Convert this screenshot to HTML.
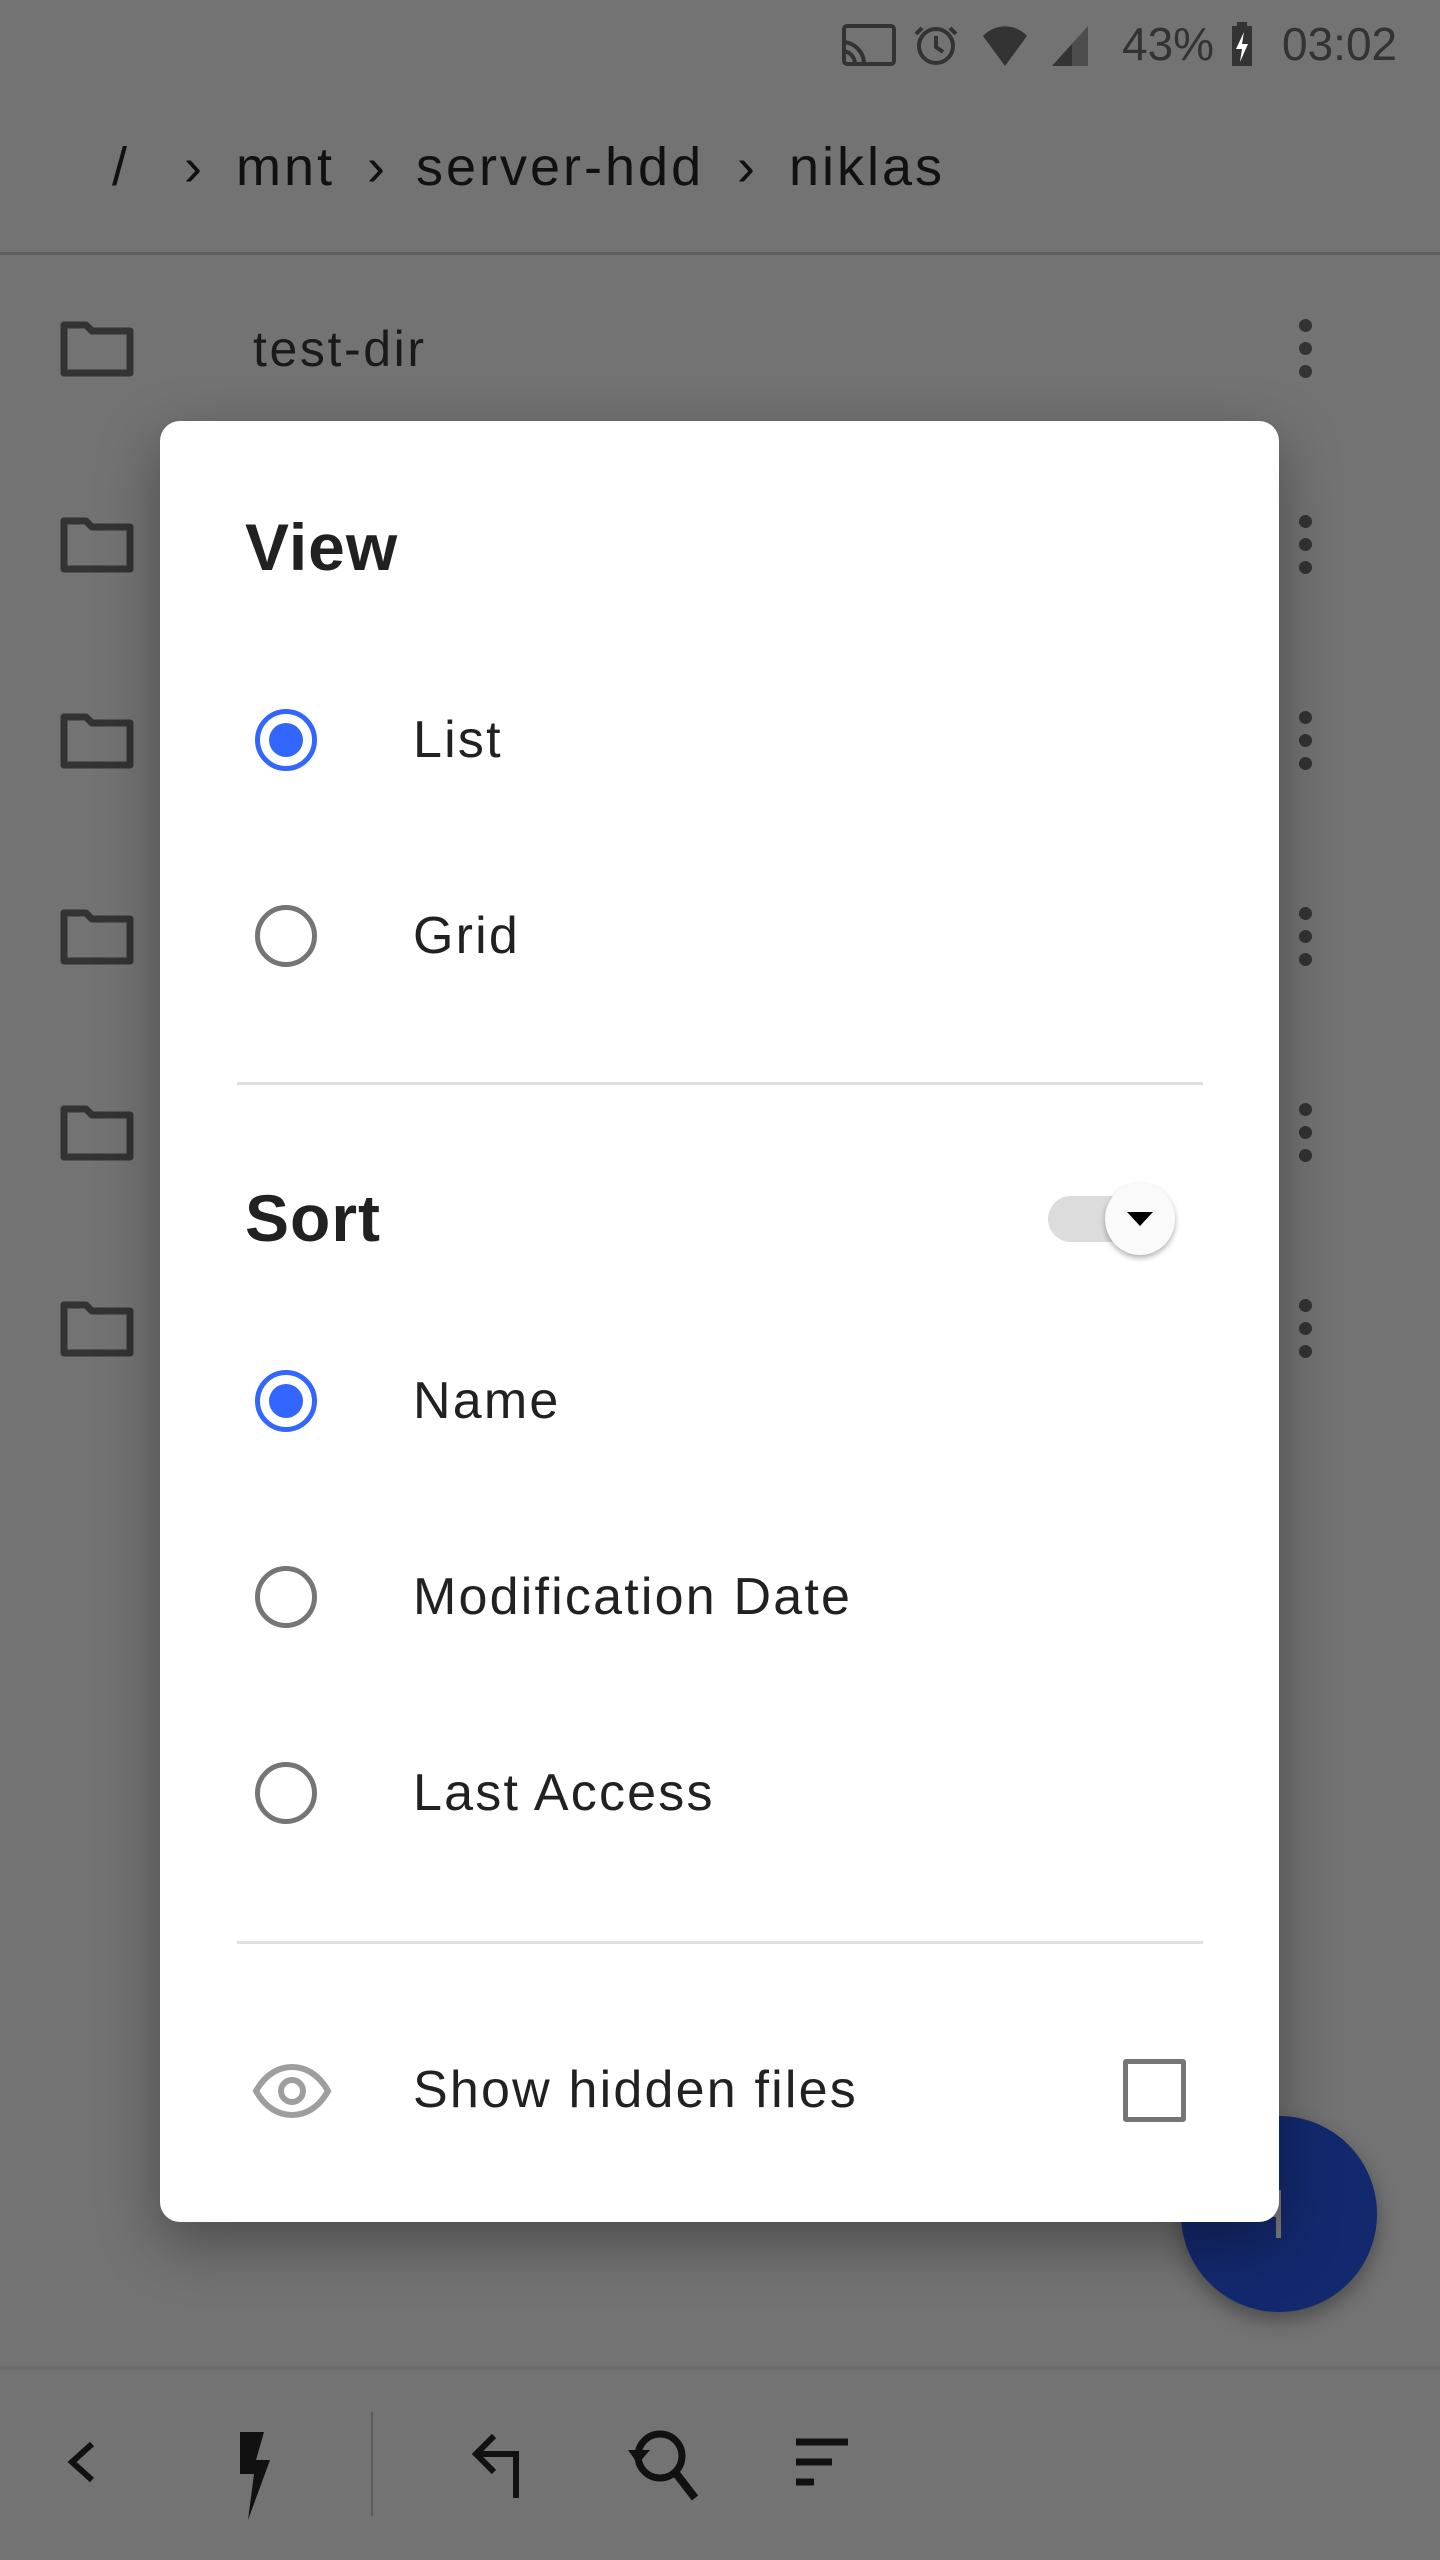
<!DOCTYPE html>
<html><head><meta charset="utf-8"><style>
*{margin:0;padding:0;box-sizing:border-box}
body{width:1440px;height:2560px;background:#737373;font-family:"Liberation Sans",sans-serif;position:relative;overflow:hidden}
.a{position:absolute}
.t{position:absolute;transform:translateY(-50%);white-space:nowrap}
.st{color:#333;font-size:46px;top:44px}
.bc{color:#111;font-size:54px;top:167px;letter-spacing:3px}
.row{color:#1a1a1a;font-size:50px;letter-spacing:2.6px}
.dlg{left:160px;top:421px;width:1119px;height:1801px;background:#fff;border-radius:20px;box-shadow:0 20px 60px rgba(0,0,0,.35)}
.dt{color:#212121;font-size:52px;letter-spacing:2.2px}
.h{color:#212121;font-size:66px;font-weight:bold;letter-spacing:1px}
.rad{position:absolute;width:62px;height:62px;border-radius:50%;border:5px solid #757575;transform:translate(-50%,-50%)}
.rad.on{border-color:#3366ff}
.rad.on::after{content:"";position:absolute;left:9px;top:9px;width:34px;height:34px;border-radius:50%;background:#3366ff}
.hr{position:absolute;left:77px;width:966px;height:3px;background:#e0e0e0}
</style></head><body>
<svg class="a" style="left:838px;top:22px" width="320" height="46" viewBox="0 0 320 46">
<g fill="none" stroke="#333" stroke-width="4"><rect x="6" y="4" width="50" height="38" rx="3"/><path d="M4 20a22 22 0 0 1 22 22M4 29a13 13 0 0 1 13 13"/><circle cx="98" cy="24" r="17"/><path d="M98 14v11l7 5M84 6l-6 6M112 6l6 6"/></g>
<path d="M145 14a30 30 0 0 1 44 0l-22 30z" fill="#333"/>
<path d="M214 44l36-40v40z" fill="#333" opacity=".6"/><path d="M214 44l20-22v22z" fill="#333"/>
</svg>
<div class="t st" style="left:1122px">43%</div>
<svg class="a" style="left:1228px;top:20px" width="28" height="48"><rect x="4" y="6" width="20" height="40" fill="#333"/><rect x="9" y="2" width="10" height="5" fill="#333"/><path d="M16 12l-8 17h6l-2 13 8-18h-6z" fill="#fff"/></svg>
<div class="t st" style="left:1282px">03:02</div>
<div class="t bc" style="left:112px">/</div>
<div class="t bc" style="left:184px">›</div>
<div class="t bc" style="left:236px">mnt</div>
<div class="t bc" style="left:367px">›</div>
<div class="t bc" style="left:416px">server-hdd</div>
<div class="t bc" style="left:737px">›</div>
<div class="t bc" style="left:789px">niklas</div>
<div class="a" style="left:0;top:252px;width:1440px;height:3px;background:#5f5f5f"></div>
<div id="rows"></div>
<script>
var ys=[349,545,741,937,1133,1329],h='';
ys.forEach(function(y){h+='<svg class="a" style="left:60px;top:'+(y-28)+'px" width="76" height="56"><path d="M4 4h22l6 6h38v42H4z" fill="none" stroke="#333" stroke-width="7" stroke-linejoin="round"/></svg><div class="a" style="left:1299px;top:'+(y-30)+'px;width:14px"><div style="width:13px;height:13px;border-radius:50%;background:#333;margin-bottom:10px"></div><div style="width:13px;height:13px;border-radius:50%;background:#333;margin-bottom:10px"></div><div style="width:13px;height:13px;border-radius:50%;background:#333"></div></div>';});
document.getElementById('rows').innerHTML=h;
</script>
<div class="t row" style="left:253px;top:349px">test-dir</div>
<div class="a" style="left:1181px;top:2116px;width:196px;height:196px;border-radius:50%;background:#13296e;box-shadow:0 8px 20px rgba(0,0,0,.35)"></div>
<div class="a" style="left:1276px;top:2190px;width:5px;height:48px;background:#7a7a7a"></div>
<div class="a" style="left:1255px;top:2212px;width:26px;height:5px;background:#7a7a7a"></div>
<div class="a dlg">
<div class="t h" style="left:85px;top:126px">View</div>
<div class="rad on" style="left:126px;top:319px"></div>
<div class="t dt" style="left:253px;top:319px">List</div>
<div class="rad" style="left:126px;top:515px"></div>
<div class="t dt" style="left:253px;top:515px">Grid</div>
<div class="hr" style="top:661px"></div>
<div class="t h" style="left:85px;top:797px">Sort</div>
<div class="a" style="left:888px;top:775px;width:110px;height:46px;border-radius:23px;background:#dcdcdc"></div>
<div class="a" style="left:945px;top:762px;width:70px;height:72px;border-radius:50%;background:#fafafa;box-shadow:0 3px 6px rgba(0,0,0,.3)"></div>
<svg class="a" style="left:965px;top:789px" width="30" height="18"><path d="M2 2h26L15 16z" fill="#000"/></svg>
<div class="rad on" style="left:126px;top:980px"></div>
<div class="t dt" style="left:253px;top:980px">Name</div>
<div class="rad" style="left:126px;top:1176px"></div>
<div class="t dt" style="left:253px;top:1176px">Modification Date</div>
<div class="rad" style="left:126px;top:1372px"></div>
<div class="t dt" style="left:253px;top:1372px">Last Access</div>
<div class="hr" style="top:1520px"></div>
<svg class="a" style="left:92px;top:1642px" width="80" height="56" viewBox="0 0 80 56"><path d="M4 28C14 10 28 4 40 4s26 6 36 24C66 46 52 52 40 52S14 46 4 28z" fill="none" stroke="#9e9e9e" stroke-width="6"/><circle cx="40" cy="28" r="11" fill="none" stroke="#9e9e9e" stroke-width="6"/></svg>
<div class="t dt" style="left:253px;top:1669px">Show hidden files</div>
<div class="a" style="left:963px;top:1638px;width:63px;height:63px;border:5px solid #757575;border-radius:3px"></div>
</div>
<div class="a" style="left:0;top:2366px;width:1440px;height:4px;background:#6a6a6a"></div>
<svg class="a" style="left:0;top:2400px" width="900" height="130">
<path d="M92 44L72 62l20 18" fill="none" stroke="#111" stroke-width="6"/>
<path d="M240 32h24l-8 28h14l-22 60 6-46h-14z" fill="#111"/>
<rect x="371" y="12" width="2" height="104" fill="#5a5a5a"/>
<path d="M516 98V54h-36M494 36l-18 18 18 18" fill="none" stroke="#111" stroke-width="6"/>
<circle cx="660" cy="56" r="22" fill="none" stroke="#111" stroke-width="7"/><path d="M675 72l20 26" stroke="#111" stroke-width="8"/><path d="M628 50l22 0-12 14z" fill="#111"/>
<path d="M796 42h52M796 62h36M796 82h18" stroke="#111" stroke-width="7"/>
</svg>
</body></html>
